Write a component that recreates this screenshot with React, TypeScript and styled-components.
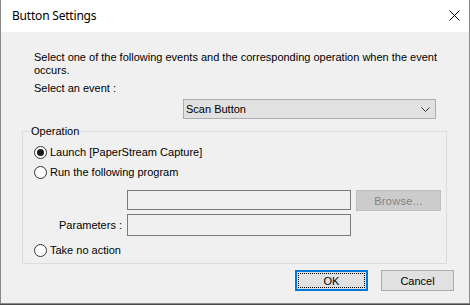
import * as React from "react";
import styled, { createGlobalStyle } from "styled-components";

const GlobalStyle = createGlobalStyle`
  html, body {
    margin: 0;
    padding: 0;
    background: #4a4a4a;
  }
  * {
    box-sizing: border-box;
  }
`;

const Window = styled.div`
  width: 470px;
  height: 304px;
  background: #f0f0f0;
  border: 1px solid #8a8a8a;
  border-top: none;
  display: flex;
  flex-direction: column;
  font-family: "Liberation Sans", Arial, sans-serif;
  font-size: 11px;
  color: #000;
`;

const TitleBar = styled.div`
  height: 32px;
  flex: none;
  background: #fff;
  display: flex;
  align-items: center;
  justify-content: space-between;
  padding: 0 9px 0 11px;
`;

const Title = styled.div`
  font-family: "Noto Sans", "Open Sans", sans-serif;
  font-size: 12px;
  letter-spacing: -0.2px;
  color: #000;
  margin-top: -1px;
`;

const CloseButton = styled.div`
  width: 12px;
  height: 12px;
  display: flex;
  align-items: center;
  justify-content: center;
  margin-top: -1px;
`;

const Body = styled.div`
  flex: 1;
  display: flex;
  flex-direction: column;
  padding: 19px 22px 0 21px;
`;

const Text = styled.div<{ $indent?: number; $top?: number }>`
  line-height: 13px;
  margin-left: ${(p) => p.$indent ?? 0}px;
  margin-top: ${(p) => p.$top ?? 0}px;
`;

const SelectBox = styled.div`
  margin: 4px 11px 0 161px;
  height: 20px;
  background: #e1e1e1;
  border: 1px solid #adadad;
  display: flex;
  align-items: center;
  justify-content: space-between;
  padding: 0 5px 0 2px;
`;

const Group = styled.fieldset`
  margin: 6px 0 0 0;
  padding: 4px 0 3px 11px;
  border: 1px solid #dcdcdc;
  display: flex;
  flex-direction: column;
`;

const Legend = styled.legend`
  padding: 0 1px;
  margin-left: -4px;
  line-height: 13px;
`;

const RadioRow = styled.label<{ $top?: number }>`
  height: 20px;
  display: flex;
  align-items: center;
  gap: 3px;
  margin-top: ${(p) => p.$top ?? 0}px;
`;

const RadioCircle = styled.span<{ $checked?: boolean }>`
  width: 13px;
  height: 13px;
  border-radius: 50%;
  border: 1px solid #333;
  background: #fff;
  display: flex;
  align-items: center;
  justify-content: center;

  &::after {
    content: "";
    width: 7px;
    height: 7px;
    border-radius: 50%;
    background: ${(p) => (p.$checked ? "#1a1a1a" : "transparent")};
  }
`;

const FieldRow = styled.div<{ $top: number }>`
  display: flex;
  align-items: flex-start;
  margin-top: ${(p) => p.$top}px;
`;

const FieldLabel = styled.div`
  width: 93px;
  text-align: right;
  padding-right: 5px;
  align-self: center;
`;

const TextField = styled.div<{ $h: number }>`
  width: 224px;
  height: ${(p) => p.$h}px;
  border: 1px solid #7a7a7a;
  background: #f0f0f0;
`;

const BrowseButton = styled.div`
  width: 85px;
  height: 21px;
  margin-left: 5px;
  background: #cccccc;
  border: 1px solid #bfbfbf;
  color: #838383;
  display: flex;
  align-items: center;
  justify-content: center;
  letter-spacing: 0.3px;
`;

const Footer = styled.div`
  display: flex;
  justify-content: flex-end;
  gap: 13px;
  margin: 6px -7px 0 0;
`;

const DialogButton = styled.div<{ $default?: boolean }>`
  width: 73px;
  height: 21px;
  background: #e1e1e1;
  border: ${(p) => (p.$default ? "2px solid #0078d7" : "1px solid #adadad")};
  display: flex;
  align-items: center;
  justify-content: center;
  position: relative;
  color: #000;

  ${(p) =>
    p.$default &&
    `
    &::after {
      content: "";
      position: absolute;
      inset: 1px;
      border: 1px dotted #000;
    }
  `}
`;

const Radio = ({
  label,
  checked,
  top,
}: {
  label: string;
  checked?: boolean;
  top?: number;
}) => (
  <RadioRow $top={top}>
    <RadioCircle $checked={checked} />
    <span>{label}</span>
  </RadioRow>
);

export default function App() {
  return (
    <>
      <GlobalStyle />
      <Window>
        <TitleBar>
          <Title>Button Settings</Title>
          <CloseButton>
            <svg width="11" height="11" viewBox="0 0 11 11">
              <path
                d="M0.5 0.5 L10.5 10.5 M10.5 0.5 L0.5 10.5"
                stroke="#000"
                strokeWidth="1"
                fill="none"
              />
            </svg>
          </CloseButton>
        </TitleBar>
        <Body>
          <Text $indent={12}>
            Select one of the following events and the corresponding operation
            when the event occurs.
          </Text>
          <Text $indent={12} $top={5}>
            Select an event :
          </Text>
          <SelectBox>
            <span>Scan Button</span>
            <svg width="9" height="5" viewBox="0 0 9 5">
              <path d="M0.5 0.5 L4.5 4.5 L8.5 0.5" stroke="#333" fill="none" />
            </svg>
          </SelectBox>
          <Group>
            <Legend>Operation</Legend>
            <Radio label="Launch [PaperStream Capture]" checked />
            <Radio label="Run the following program" />
            <FieldRow $top={8}>
              <FieldLabel />
              <TextField $h={20} />
              <BrowseButton>Browse...</BrowseButton>
            </FieldRow>
            <FieldRow $top={3}>
              <FieldLabel>Parameters :</FieldLabel>
              <TextField $h={22} />
            </FieldRow>
            <Radio label="Take no action" top={4} />
          </Group>
          <Footer>
            <DialogButton $default>OK</DialogButton>
            <DialogButton>Cancel</DialogButton>
          </Footer>
        </Body>
      </Window>
    </>
  );
}
